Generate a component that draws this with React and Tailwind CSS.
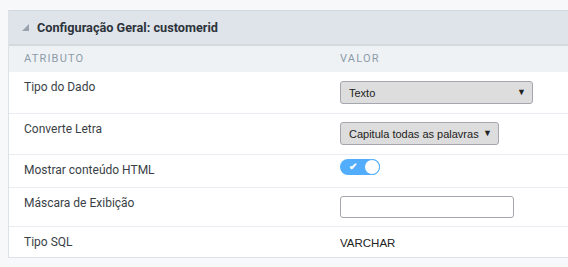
import { useState } from 'react';

function Select({ value, width }) {
  return (
    <div
      className={`flex items-center justify-between whitespace-nowrap h-[23px] ${width} bg-[#dddddd] border border-[#a4a8ae] rounded-[3px] pl-[8px] pr-[6px] text-[11px] text-[#222] font-['Liberation_Sans',Arial,sans-serif]`}
    >
      <span>{value}</span>
      <span className="text-[9px] leading-none">▼</span>
    </div>
  );
}

function Toggle({ on }) {
  return (
    <div className={`relative w-[40px] h-[16px] rounded-full ${on ? 'bg-[#52aefc]' : 'bg-gray-300'}`}>
      <span className="absolute left-[9px] top-[1px] text-[10px] leading-[14px] text-white font-bold">✔</span>
      <span className="absolute right-0 top-0 w-[16px] h-[16px] rounded-full bg-white border border-[#52aefc]" />
    </div>
  );
}

function Row({ label, h, pt, children, first }) {
  return (
    <div className={`flex ${h} ${first ? '' : 'border-t border-[#e9ecf0]'}`}>
      <div className="w-[331px] pl-[15px] pt-[8px] leading-[14px] text-[12px] text-[#3a3f47]">{label}</div>
      <div className={`flex-1 leading-[14px] ${pt}`}>{children}</div>
    </div>
  );
}

export default function App() {
  const [html, setHtml] = useState(true);
  return (
    <div className="w-[568px] h-[267px] overflow-hidden bg-[#f7f8fa] pt-[10px] pl-[8px] font-['Roboto',Arial,sans-serif]">
      <div className="w-[600px] bg-white border-l border-b border-[#dde2e6]">
        <div className="flex items-center h-[36px] bg-[#dfe4ea] border-t border-b-2 border-[#d2dade] pl-[13px]">
          <svg width="7" height="7" viewBox="0 0 7 7" className="mr-[8px]">
            <polygon points="7,0 7,7 0,7" fill="#9aa3ad" />
          </svg>
          <span className="text-[12.7px] font-bold text-[#2d333b]">Configuração Geral: customerid</span>
        </div>
        <div className="flex items-center h-[26px] bg-[#eef2f5] text-[11px] tracking-[1.2px] text-[#8d9ba8]">
          <div className="w-[331px] pl-[15px]">ATRIBUTO</div>
          <div className="flex-1">VALOR</div>
        </div>
        <Row label="Tipo do Dado" h="h-[41px]" pt="pt-[9px]" first>
          <Select value="Texto" width="w-[193px]" />
        </Row>
        <Row label="Converte Letra" h="h-[41px]" pt="pt-[8px]">
          <Select value="Capitula todas as palavras" width="w-[159px]" />
        </Row>
        <Row label="Mostrar conteúdo HTML" h="h-[33px]" pt="pt-[4px]">
          <div onClick={() => setHtml(!html)} className="w-fit cursor-pointer">
            <Toggle on={html} />
          </div>
        </Row>
        <Row label="Máscara de Exibição" h="h-[39px]" pt="pt-[8px]">
          <input className="w-[174px] h-[22px] border border-[#a4a8ae] rounded-[3px] bg-white outline-none" />
        </Row>
        <Row label="Tipo SQL" h="h-[31px]" pt="pt-[8px]">
          <span className="text-[11.5px] text-[#222] font-['Liberation_Sans',Arial,sans-serif]">VARCHAR</span>
        </Row>
      </div>
    </div>
  );
}
